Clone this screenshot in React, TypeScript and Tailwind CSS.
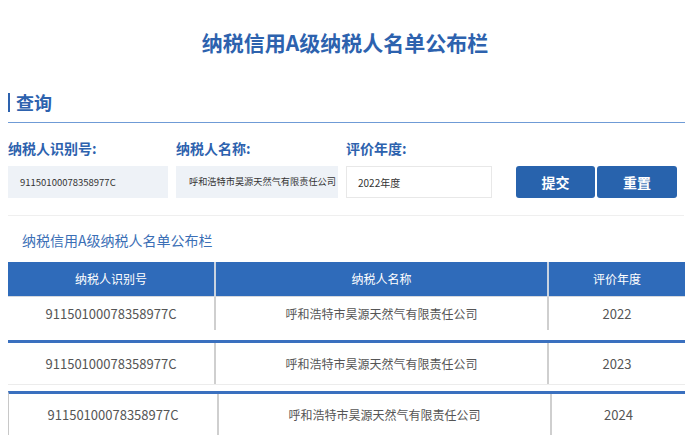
const FONT = { fontFamily: '"Noto Sans CJK SC", "Noto Sans", sans-serif' };

const rows = [
  { id: '91150100078358977C', name: '呼和浩特市昊源天然气有限责任公司', year: '2022' },
  { id: '91150100078358977C', name: '呼和浩特市昊源天然气有限责任公司', year: '2023' },
  { id: '91150100078358977C', name: '呼和浩特市昊源天然气有限责任公司', year: '2024' },
];

export default function App() {
  return (
    <div className="relative h-[447px] w-[690px] overflow-hidden bg-white" style={FONT}>
      {/* Title */}
      <h1 className="pt-[27px] text-center text-[21px] font-bold leading-[30px] text-[#2d62ae]">
        纳税信用A级纳税人名单公布栏
      </h1>

      {/* 查询 */}
      <div className="ml-[8px] mt-[36px] flex h-[19px] items-center border-l-2 border-[#2d62ae] pl-[6px]">
        <span className="text-[18px] font-bold leading-[19px] text-[#2d62ae]">查询</span>
      </div>
      <div className="ml-[8px] mr-[5px] mt-[10px] h-px bg-[#6f9bd6]" />

      {/* Form */}
      <div className="mt-[17px] flex items-start pl-[8px]">
        <div className="flex w-[168px] flex-col">
          <span className="text-[14px] font-bold leading-[16px] text-[#2d62ae]">纳税人识别号:</span>
          <div className="mt-[10px] flex h-[32px] w-[160px] items-center bg-[#eef2f7] pl-[12px] text-[9.5px] text-[#333]">
            91150100078358977C
          </div>
        </div>
        <div className="flex w-[170px] flex-col">
          <span className="text-[14px] font-bold leading-[16px] text-[#2d62ae]">纳税人名称:</span>
          <div className="mt-[10px] flex h-[32px] w-[162px] items-center overflow-hidden whitespace-nowrap bg-[#eef2f7] pl-[13px] text-[9.2px] text-[#333]">
            呼和浩特市昊源天然气有限责任公司
          </div>
        </div>
        <div className="flex w-[170px] flex-col">
          <span className="text-[14px] font-bold leading-[16px] text-[#2d62ae]">评价年度:</span>
          <div className="mt-[10px] flex h-[32px] w-[146px] items-center border border-[#e8e8e8] bg-white pl-[11px] text-[10px] text-[#333]">
            2022年度
          </div>
        </div>
        <div className="mt-[26px] flex gap-[2px]">
          <button className="h-[32px] w-[79px] rounded-[3px] bg-[#2863ad] text-[14px] font-bold text-white">提交</button>
          <button className="h-[32px] w-[80px] rounded-[3px] bg-[#2863ad] text-[14px] font-bold text-white">重置</button>
        </div>
      </div>

      <div className="ml-[8px] mr-[6px] mt-[17px] h-px bg-[#efefef]" />

      {/* Subtitle */}
      <p className="ml-[22px] mt-[14px] text-[14px] leading-[20px] text-[#3b6fb6]">纳税信用A级纳税人名单公布栏</p>

      {/* Table */}
      <div className="ml-[8px] mr-[5px] mt-[12px]">
        <div className="flex h-[34px] bg-[#2f6bba] text-[12px] text-white">
          <div className="flex w-[206px] items-center justify-center">纳税人识别号</div>
          <div className="flex w-[333px] items-center justify-center border-l-2 border-[#c9d3e0]">纳税人名称</div>
          <div className="flex flex-1 items-center justify-center border-l-2 border-[#c9d3e0]">评价年度</div>
        </div>
        {rows.map((r, i) => (
          <div
            key={r.year}
            className={
              i === 0
                ? 'flex h-[34px] border-t border-[#d4d8de] text-[#555]'
                : i === 1
                  ? 'mt-[10px] flex h-[45px] border-t-[3px] border-b border-[#3a70bf] border-b-[#ececec] text-[#555]'
                  : 'mt-[6px] flex h-[44px] border-l border-t-[3px] border-[#c8c8c8] border-t-[#3a70bf] text-[#555]'
            }
          >
            <div className={(i === 2 ? 'w-[208px]' : 'w-[206px]') + ' flex items-center justify-center text-[13px]'}>
              {r.id}
            </div>
            <div className="flex w-[333px] items-center justify-center border-l-2 border-[#cfcfcf] text-[12px]">
              {r.name}
            </div>
            <div className="flex flex-1 items-center justify-center border-l-2 border-[#cfcfcf] text-[13px]">
              {r.year}
            </div>
          </div>
        ))}
      </div>
    </div>
  );
}
